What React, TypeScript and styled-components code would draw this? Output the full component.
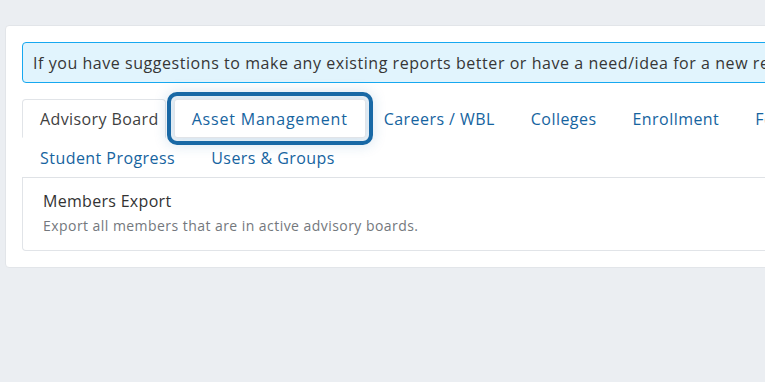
import * as React from 'react';
import styled, { createGlobalStyle } from 'styled-components';

const GlobalStyle = createGlobalStyle`
  html, body {
    margin: 0;
    padding: 0;
    background: #ebeef2;
    overflow: hidden;
  }
  body {
    font-family: "Open Sans", "Liberation Sans", sans-serif;
    color: #333;
  }
`;

const tabs = [
  'Advisory Board',
  'Asset Management',
  'Careers / WBL',
  'Colleges',
  'Enrollment',
  'Forms',
  'Student Progress',
  'Users & Groups',
];

const Page = styled.div`
  width: 765px;
  height: 382px;
  padding: 25px 0 0 5px;
  box-sizing: border-box;
`;

const Card = styled.div`
  width: 914px;
  background: #fff;
  border: 1px solid #e2e5e9;
  border-radius: 4px;
  padding: 16px;
  box-sizing: border-box;
`;

const Alert = styled.div`
  background: #e1f4fd;
  border: 1px solid #16a8f0;
  border-radius: 4px;
  height: 41px;
  box-sizing: border-box;
  padding: 0 10px;
  display: flex;
  align-items: center;
  white-space: nowrap;
  overflow: hidden;
  font-size: 16px;
  letter-spacing: 0.55px;
  color: #363636;
`;

const TabList = styled.div`
  margin-top: 16px;
  display: flex;
  flex-wrap: wrap;
  border-bottom: 1px solid #dfe2e6;
`;

const Tab = styled.div<{ $active?: boolean; $focus?: boolean }>`
  height: 39px;
  padding: 0 17px;
  box-sizing: border-box;
  display: flex;
  align-items: center;
  font-size: 16px;
  letter-spacing: 0.45px;
  white-space: nowrap;
  color: ${(p) => (p.$active ? '#3f3f3f' : '#16649f')};
  border: 1px solid ${(p) => (p.$active || p.$focus ? '#e1e4e8' : 'transparent')};
  border-bottom-color: ${(p) => (p.$focus ? '#e1e4e8' : 'transparent')};
  border-radius: ${(p) => (p.$focus ? '3px' : '4px 4px 0 0')};
  background: #fff;
  ${(p) =>
    p.$active &&
    `
    letter-spacing: 0.4px;
    padding-right: 6px;
    margin-right: 8px;
  `}
  ${(p) =>
    p.$focus &&
    `
    letter-spacing: 0.8px;
    outline: 4px solid #1868a5;
    outline-offset: 3px;
    box-shadow: 0 0 14px 7px rgba(26, 106, 166, 0.18);
    position: relative;
    z-index: 1;
  `}
`;

const Panel = styled.div`
  border: 1px solid #e1e4e8;
  border-top: none;
  border-radius: 0 0 4px 4px;
  padding: 12px 20px 15px;
  box-sizing: border-box;
`;

const ReportTitle = styled.div`
  font-size: 16px;
  letter-spacing: 0.3px;
  color: #333;
  line-height: 22px;
`;

const ReportDesc = styled.div`
  margin-top: 4px;
  font-size: 14px;
  letter-spacing: 0.45px;
  color: #74787d;
  line-height: 19px;
`;

export default function App() {
  return (
    <>
      <GlobalStyle />
      <Page>
        <Card>
          <Alert>
            If you have suggestions to make any existing reports better or have a need/idea for a new report, please let us know.
          </Alert>
          <TabList>
            {tabs.map((t, i) => (
              <Tab key={t} $active={i === 0} $focus={i === 1}>
                {t}
              </Tab>
            ))}
          </TabList>
          <Panel>
            <ReportTitle>Members Export</ReportTitle>
            <ReportDesc>Export all members that are in active advisory boards.</ReportDesc>
          </Panel>
        </Card>
      </Page>
    </>
  );
}
